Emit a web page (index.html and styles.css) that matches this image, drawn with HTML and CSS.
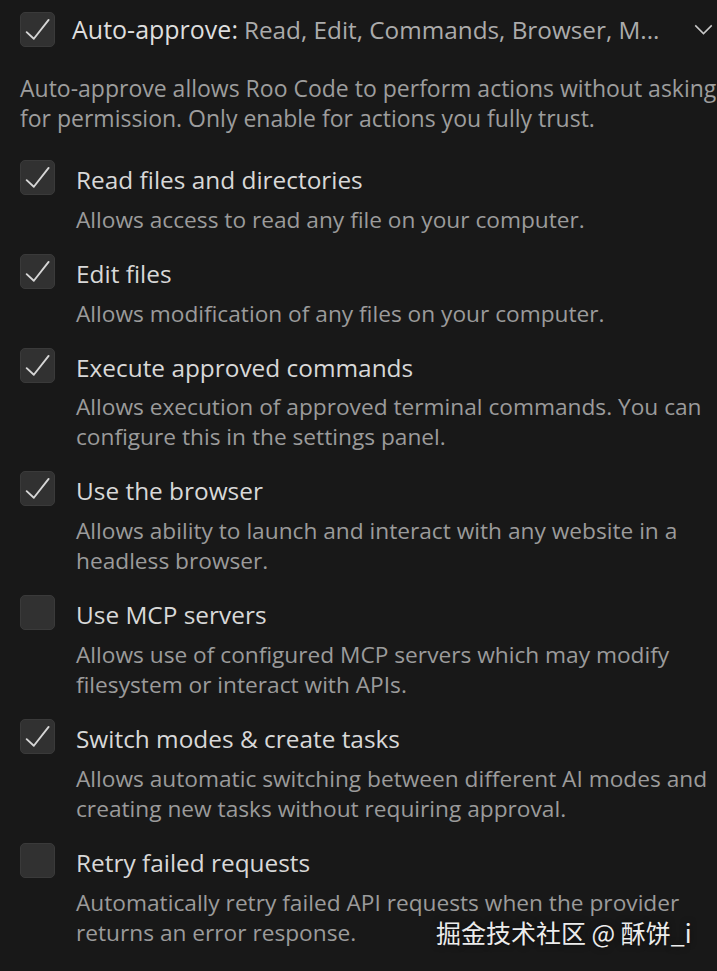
FILE: index.html
```html
<!DOCTYPE html>
<html lang="en">
<head>
<meta charset="utf-8">
<title>Auto-approve</title>
<link rel="stylesheet" href="styles.css">
</head>
<body>
<div class="panel">
  <div class="header">
    <span class="box checked">
      <svg viewBox="0 0 35 35" class="tick"><path d="M6 20.3 L13.6 27.3 L29.3 7.3"/></svg>
    </span>
    <span class="header-text"><span class="header-label">Auto-approve:</span> <span class="header-value">Read, Edit, Commands, Browser, M...</span></span>
    <svg class="chevron" viewBox="0 0 20 12"><path d="M1 1.5 L10 10.5 L19 1.5"/></svg>
  </div>
  <p class="intro">Auto-approve allows Roo Code to perform actions without asking for permission. Only enable for actions you fully trust.</p>

  <div class="option">
    <span class="box checked"><svg viewBox="0 0 35 35" class="tick"><path d="M6 20.3 L13.6 27.3 L29.3 7.3"/></svg></span>
    <div class="option-body">
      <div class="option-title">Read files and directories</div>
      <div class="option-desc">Allows access to read any file on your computer.</div>
    </div>
  </div>

  <div class="option">
    <span class="box checked"><svg viewBox="0 0 35 35" class="tick"><path d="M6 20.3 L13.6 27.3 L29.3 7.3"/></svg></span>
    <div class="option-body">
      <div class="option-title">Edit files</div>
      <div class="option-desc">Allows modification of any files on your computer.</div>
    </div>
  </div>

  <div class="option">
    <span class="box checked"><svg viewBox="0 0 35 35" class="tick"><path d="M6 20.3 L13.6 27.3 L29.3 7.3"/></svg></span>
    <div class="option-body">
      <div class="option-title">Execute approved commands</div>
      <div class="option-desc">Allows execution of approved terminal commands. You can configure this in the settings panel.</div>
    </div>
  </div>

  <div class="option">
    <span class="box checked"><svg viewBox="0 0 35 35" class="tick"><path d="M6 20.3 L13.6 27.3 L29.3 7.3"/></svg></span>
    <div class="option-body">
      <div class="option-title">Use the browser</div>
      <div class="option-desc">Allows ability to launch and interact with any website in a headless browser.</div>
    </div>
  </div>

  <div class="option">
    <span class="box"></span>
    <div class="option-body">
      <div class="option-title">Use MCP servers</div>
      <div class="option-desc">Allows use of configured MCP servers which may modify filesystem or interact with APIs.</div>
    </div>
  </div>

  <div class="option">
    <span class="box checked"><svg viewBox="0 0 35 35" class="tick"><path d="M6 20.3 L13.6 27.3 L29.3 7.3"/></svg></span>
    <div class="option-body">
      <div class="option-title">Switch modes &amp; create tasks</div>
      <div class="option-desc">Allows automatic switching between different AI modes and creating new tasks without requiring approval.</div>
    </div>
  </div>

  <div class="option">
    <span class="box"></span>
    <div class="option-body">
      <div class="option-title">Retry failed requests</div>
      <div class="option-desc">Automatically retry failed API requests when the provider returns an error response.</div>
    </div>
  </div>
</div>
<div class="watermark">掘金技术社区 @ 酥饼_i</div>
</body>
</html>
```

FILE: styles.css
```css
html, body {
  margin: 0;
  padding: 0;
  background: #181818;
}
body {
  width: 717px;
  height: 971px;
  overflow: hidden;
  position: relative;
  font-family: "Open Sans", "Noto Sans", sans-serif;
  font-size: 23px;
  color: #d4d4d4;
}
.panel {
  padding: 12px 0 0 20px;
}
.header {
  display: flex;
  align-items: center;
  height: 35px;
}
.header-text {
  margin-left: 17px;
  flex: 1;
  white-space: nowrap;
  line-height: 30px;
}
.header-label {
  color: #dedede;
  font-size: 25px;
}
.header-value {
  color: #ababab;
  font-size: 24.3px;
}
.chevron {
  width: 19px;
  height: 11px;
  margin-right: 4px;
  fill: none;
  stroke: #c8c8c8;
  stroke-width: 1.6;
}
.box {
  flex: none;
  width: 35px;
  height: 35px;
  box-sizing: border-box;
  border-radius: 5px;
  background: #313131;
  border: 1px solid #3a3a3a;
  display: block;
}
.tick {
  display: block;
  width: 33px;
  height: 33px;
  margin: 0;
  fill: none;
  stroke: #d6d6d6;
  stroke-width: 2;
  stroke-linecap: round;
  stroke-linejoin: round;
}
.intro {
  margin: 26px 0 27px 0;
  font-size: 23px;
  line-height: 30px;
  color: #9d9d9d;
}
.option {
  display: flex;
  gap: 21px;
  margin-bottom: 19px;
}
.option-body {
  padding-top: 5px;
  flex: 1;
}
.option-title {
  font-size: 24.4px;
  line-height: 30px;
  color: #d8d8d8;
}
.option-desc {
  margin-top: 9.8px;
  font-size: 22.7px;
  line-height: 30px;
  color: #9b9b9b;
}
.watermark {
  position: absolute;
  left: 436px;
  top: 918px;
  font-family: "Noto Sans CJK SC", "Noto Sans", sans-serif;
  font-size: 25px;
  line-height: 28px;
  color: #ececec;
  text-shadow: 0 0 6px rgba(0,0,0,0.6);
}
```
